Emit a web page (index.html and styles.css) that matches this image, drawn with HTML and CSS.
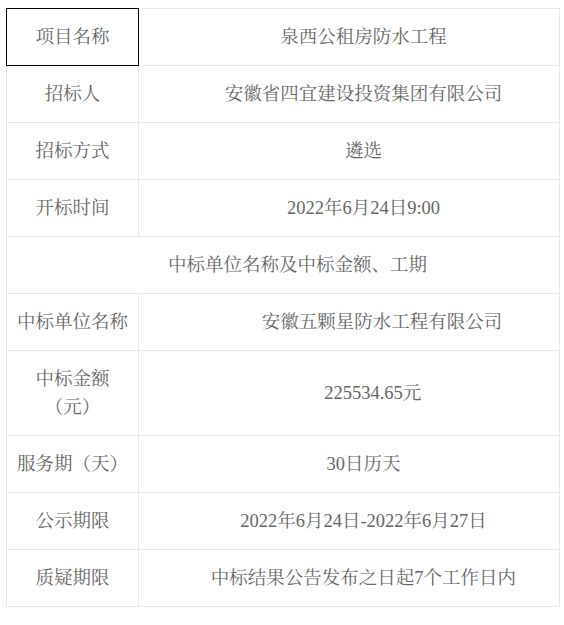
FILE: index.html
```html
<!DOCTYPE html>
<html lang="zh-CN">
<head>
  <meta charset="UTF-8">
  <meta name="viewport" content="width=device-width, initial-scale=1.0">
  <title>中标结果公告</title>
  <link rel="stylesheet" href="styles.css">
</head>
<body>

  <table class="info-table">
    <tr>
      <td class="label is-active">项目名称</td>
      <td class="value">泉西公租房防水工程</td>
    </tr>
    <tr>
      <td class="label">招标人</td>
      <td class="value">安徽省四宜建设投资集团有限公司</td>
    </tr>
    <tr>
      <td class="label">招标方式</td>
      <td class="value">遴选</td>
    </tr>
    <tr>
      <td class="label">开标时间</td>
      <td class="value">2022年6月24日9:00</td>
    </tr>
    <tr>
      <td class="value" colspan="2">中标单位名称及中标金额、工期</td>
    </tr>
    <tr>
      <td class="label">中标单位名称</td>
      <td class="value">　　安徽五颗星防水工程有限公司</td>
    </tr>
    <tr>
      <td class="label">中标金额<br>（元）</td>
      <td class="value">　225534.65元</td>
    </tr>
    <tr>
      <td class="label">服务期（天）</td>
      <td class="value">30日历天</td>
    </tr>
    <tr>
      <td class="label">公示期限</td>
      <td class="value">2022年6月24日-2022年6月27日</td>
    </tr>
    <tr>
      <td class="label">质疑期限</td>
      <td class="value">中标结果公告发布之日起7个工作日内</td>
    </tr>
  </table>

  <p class="note">三、招标人及代理机构的联系方式</p>

</body>
</html>
```

FILE: styles.css
```css
body {
  margin: 8px 4px 0 6px;
  font-family: "Liberation Serif", "Noto Serif CJK SC", "Noto Sans CJK SC", serif;
  font-size: 18.5px;
  line-height: 28px;
  color: #666666;
  background: #ffffff;
}

/* Result table */
.info-table {
  width: 554px;
  border-collapse: collapse;
}

.info-table td {
  border: 1px solid #e8e8e8;
  padding: 14px 10px;
  text-align: center;
  vertical-align: middle;
}

.info-table .label {
  width: 111px;
}

.info-table .value {
  padding-left: 39px; /* content sits a bit right of centre */
}

.info-table .is-active {
  border-color: #000000;
}

.note {
  margin: 14px 0 0;
  padding-left: 112px;
}
```
